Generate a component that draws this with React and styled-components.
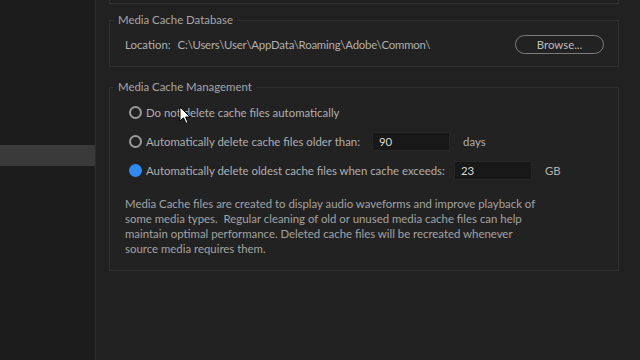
import React from 'react';
import styled, { createGlobalStyle } from 'styled-components';

const Global = createGlobalStyle`
    html, body {
        margin: 0;
        padding: 0;
        background: #212121;
    }
    #root {
        width: 640px;
        height: 360px;
        overflow: hidden;
    }
`;

const Window = styled.div`
    position: relative;
    display: flex;
    width: 640px;
    height: 360px;
    font-family: Lato, 'Liberation Sans', sans-serif;
    font-size: 11.4px;
    color: #b4b4b4;
    background: #212121;
`;

const Sidebar = styled.div`
    width: 95px;
    flex-shrink: 0;
    padding-top: 145px;
    background: #1c1c1c;
    box-sizing: border-box;
`;

const SideItem = styled.div`
    height: 21px;
    background: ${(p) => (p.$active ? '#3a3a3a' : 'transparent')};
`;

const Main = styled.div`
    flex: 1;
    display: flex;
    flex-direction: column;
    padding: 0 21px 0 13px;
    border-left: 1px solid #2d2d2d;
    background: #212121;
`;

const PrevGroupTail = styled.div`
    height: 3px;
    border: 1px solid #303030;
    border-top: none;
`;

const Group = styled.fieldset`
    margin: ${(p) => p.$top}px 0 0;
    padding: ${(p) => p.$padTop}px 14px ${(p) => p.$padBottom}px 15px;
    border: 1px solid #303030;
    background: #222222;
    min-width: 0;
`;

const Legend = styled.legend`
    margin-left: -11px;
    padding: 0 4px;
    line-height: 14px;
    font-size: 11.4px;
    color: #a6a6a6;
`;

const Row = styled.div`
    display: flex;
    align-items: center;
    height: 19px;
`;

const Label = styled.span`
    color: #b0b0b0;
    white-space: pre;
    margin-right: ${(p) => p.$gap || 0}px;
    letter-spacing: ${(p) => (p.$tight ? '-0.2px' : 'normal')};
`;

const Spacer = styled.div`
    flex: 1;
`;

const PillButton = styled.button`
    width: 89px;
    height: 19px;
    padding: 0;
    border: 1.5px solid #7c7c7c;
    border-radius: 10px;
    background: transparent;
    color: #bcbcbc;
    font-family: inherit;
    font-size: 11.4px;
`;

const Options = styled.div`
    display: flex;
    flex-direction: column;
    gap: 10px;
`;

const Radio = styled.span`
    width: 13px;
    height: 13px;
    margin: 0 4px 0 4px;
    border-radius: 50%;
    box-sizing: border-box;
    flex-shrink: 0;
    border: ${(p) => (p.$checked ? 'none' : '2px solid #9a9a9a')};
    background: ${(p) => (p.$checked ? '#2f8cef' : 'transparent')};
`;

const NumberField = styled.div`
    width: 78px;
    height: 19px;
    box-sizing: border-box;
    padding: 0 6px;
    display: flex;
    align-items: center;
    background: #181818;
    border: 1px solid #262626;
    color: #d6d6d6;
    margin-right: 13px;
`;

const Note = styled.p`
    margin: 16px 0 0;
    line-height: 15px;
    color: #a2a2a2;
    white-space: pre;
`;

const Cursor = styled.svg`
    position: absolute;
    left: 179px;
    top: 106px;
`;

const noteLines = [
    'Media Cache files are created to display audio waveforms and improve playback of',
    'some media types.  Regular cleaning of old or unused media cache files can help',
    'maintain optimal performance. Deleted cache files will be recreated whenever',
    'source media requires them.',
];

export default function App() {
    return (
        <Window>
            <Global />
            <Sidebar>
                <SideItem $active />
            </Sidebar>
            <Main>
                <PrevGroupTail />
                <Group $top={9} $padTop={8} $padBottom={12}>
                    <Legend>Media Cache Database</Legend>
                    <Row>
                        <Label $gap={7}>Location:</Label>
                        <Label $tight>C:\Users\User\AppData\Roaming\Adobe\Common\</Label>
                        <Spacer />
                        <PillButton>Browse...</PillButton>
                    </Row>
                </Group>
                <Group $top={13} $padTop={9} $padBottom={14}>
                    <Legend>Media Cache Management</Legend>
                    <Options>
                        <Row>
                            <Radio />
                            <Label>Do not delete cache files automatically</Label>
                        </Row>
                        <Row>
                            <Radio />
                            <Label $gap={12}>Automatically delete cache files older than:</Label>
                            <NumberField>90</NumberField>
                            <Label>days</Label>
                        </Row>
                        <Row>
                            <Radio $checked />
                            <Label $gap={9}>Automatically delete oldest cache files when cache exceeds:</Label>
                            <NumberField>23</NumberField>
                            <Label>GB</Label>
                        </Row>
                    </Options>
                    <Note>
                        {noteLines.map((line) => (
                            <span key={line}>
                                {line}
                                <br />
                            </span>
                        ))}
                    </Note>
                </Group>
            </Main>
            <Cursor width="12" height="19" viewBox="0 0 12 19">
                <path
                    d="M1 1 L1 15 L4.5 11.8 L7 17.5 L9 16.6 L6.6 11 L11 11 Z"
                    fill="#ffffff"
                    stroke="#000000"
                    strokeWidth="1"
                    strokeLinejoin="round"
                />
            </Cursor>
        </Window>
    );
}
